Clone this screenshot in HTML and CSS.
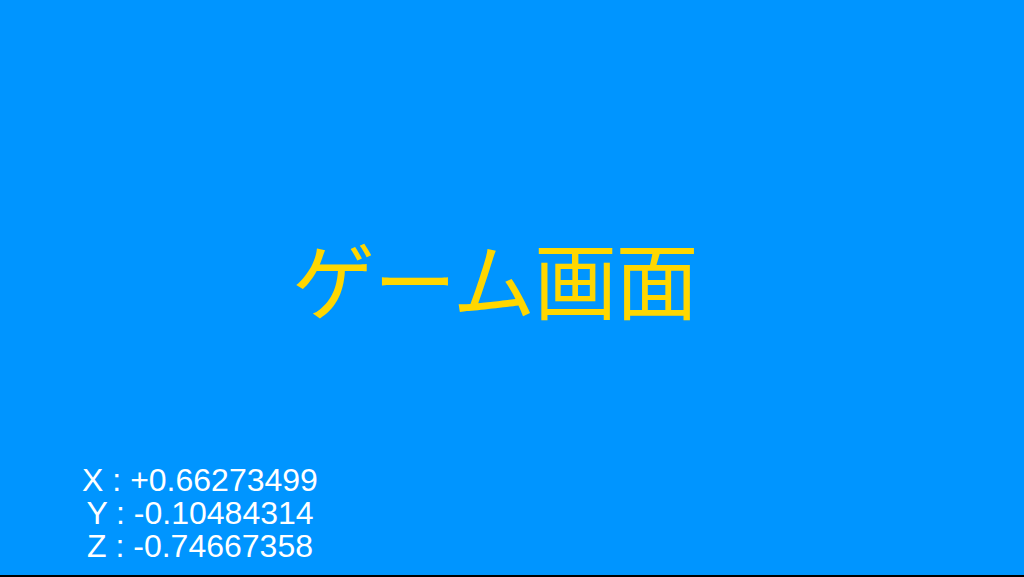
FILE: index.html
```html
<!DOCTYPE html>
<html lang="ja">
<head>
<meta charset="utf-8">
<link rel="stylesheet" href="styles.css">
</head>
<body>
<div class="screen">
  <div class="title">ゲーム画面</div>
  <div class="coords">
    <div>X : +0.66273499</div>
    <div>Y : -0.10484314</div>
    <div>Z : -0.74667358</div>
  </div>
</div>
</body>
</html>
```
FILE: styles.css
```css
html, body {
  margin: 0;
  padding: 0;
  background: #000;
}
.screen {
  width: 1024px;
  height: 575px;
  border-bottom: 2px solid #000;
  background: #0095ff;
  display: flex;
  flex-direction: column;
  overflow: hidden;
}
.title {
  margin-top: 236px;
  padding-left: 292px;
  font-family: "Noto Sans CJK JP", sans-serif;
  font-size: 83px;
  letter-spacing: -1.5px;
  line-height: 1;
  color: #ffd700;
}
.coords {
  margin-top: auto;
  margin-bottom: 12px;
  width: 400px;
  text-align: center;
  font-family: "Liberation Sans", Arial, sans-serif;
  font-size: 32px;
  line-height: 33px;
  color: #fff;
}
```
